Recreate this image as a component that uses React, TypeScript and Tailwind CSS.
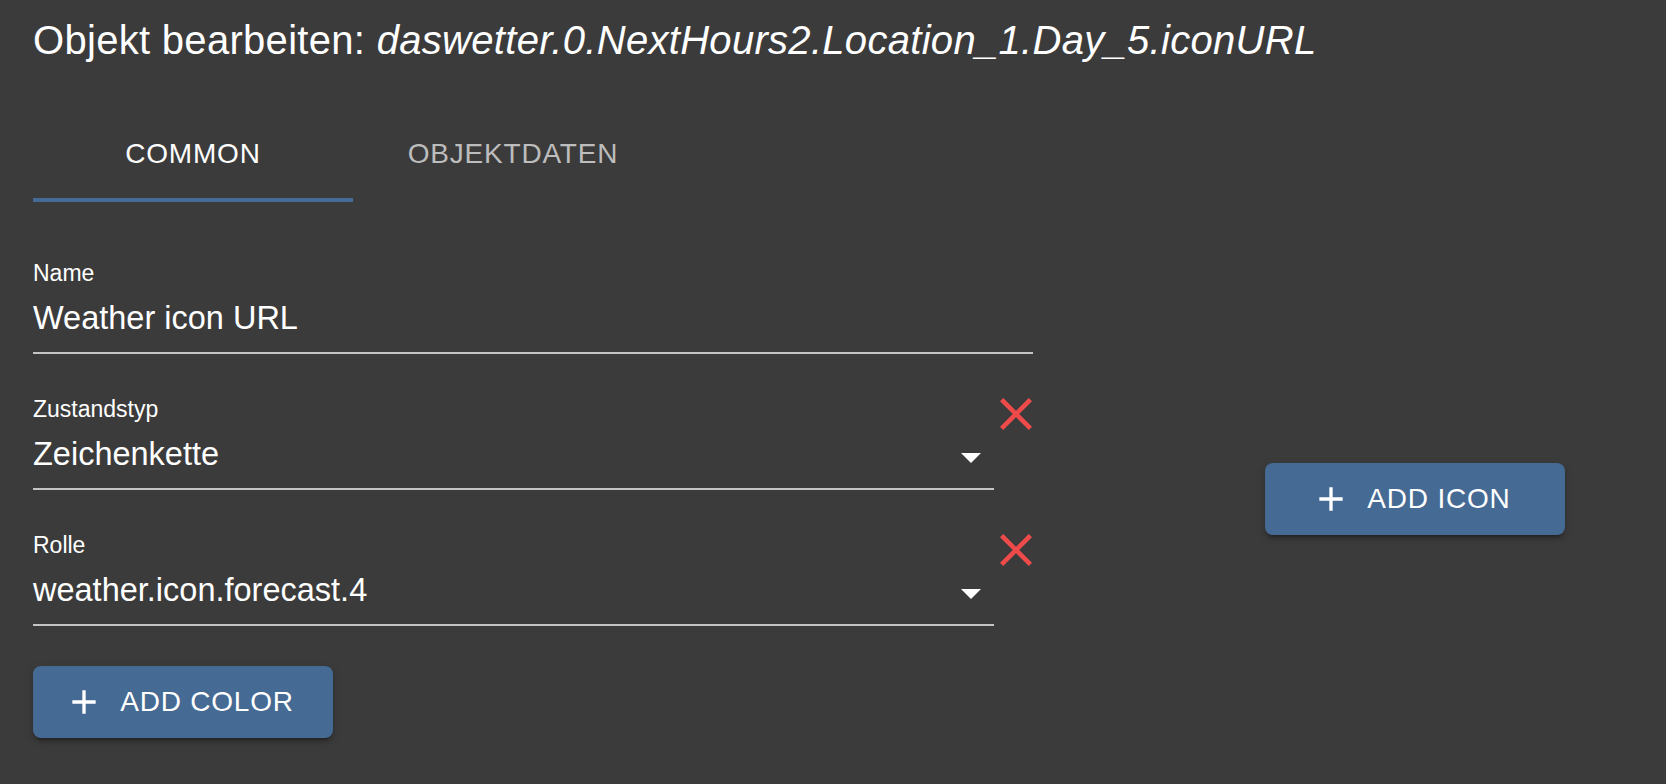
import React from "react";

const fields = [
  { label: "Zustandstyp", value: "Zeichenkette" },
  { label: "Rolle", value: "weather.icon.forecast.4" },
];

function PlusIcon() {
  return (
    <svg width="40" height="40" viewBox="0 0 24 24" className="-ml-[8px] mr-[16px] shrink-0" fill="currentColor">
      <path d="M19 13h-6v6h-2v-6H5v-2h6V5h2v6h6v2z" />
    </svg>
  );
}

function CloseIcon() {
  return (
    <svg width="32" height="32" viewBox="5 5 14 14" fill="#ee4a4a">
      <path d="M19 6.41L17.59 5 12 10.59 6.41 5 5 6.41 10.59 12 5 17.59 6.41 19 12 13.41 17.59 19 19 17.59 13.41 12z" />
    </svg>
  );
}

function AddButton({ label }: { label: string }) {
  return (
    <button className="flex h-[72px] w-[300px] items-center justify-center rounded-[8px] bg-[#456a94] text-[28px] font-medium uppercase tracking-[0.8px] text-white shadow-[0_6px_2px_-4px_rgba(0,0,0,0.2),0_4px_4px_0_rgba(0,0,0,0.14),0_2px_10px_0_rgba(0,0,0,0.12)]">
      <PlusIcon />
      <span className="leading-[40px]">{label}</span>
    </button>
  );
}

function TextField({ label, value }: { label: string; value: string }) {
  return (
    <div className="flex flex-col">
      <div className="text-[23px] leading-[28px]">{label}</div>
      <div className="mt-[11px] border-b-2 border-[#c4c4c4] pb-[14px] text-[32.5px] leading-[40px]">{value}</div>
    </div>
  );
}

function SelectField({ label, value }: { label: string; value: string }) {
  return (
    <div className="flex">
      <div className="flex w-[961px] flex-col">
        <div className="text-[23px] leading-[28px]">{label}</div>
        <div className="mt-[11px] flex items-center justify-between border-b-2 border-[#c4c4c4] pb-[14px]">
          <span className="text-[32.5px] leading-[40px]">{value}</span>
          <svg width="20" height="10" viewBox="0 0 10 5" className="mr-[13px] mt-[8px]" fill="white">
            <path d="M0 0l5 5 5-5z" />
          </svg>
        </div>
      </div>
      <div className="ml-[6px] mt-[3px]">
        <CloseIcon />
      </div>
    </div>
  );
}

export default function App() {
  return (
    <div className="min-h-screen w-full bg-[#3b3b3b] font-['Liberation_Sans',Arial,sans-serif] text-white">
      <div className="pl-[33px] pt-[16px]">
        <h2 className="text-[40px] font-normal leading-[48px] tracking-[0.3px]">
          Objekt bearbeiten: <span className="italic">daswetter.0.NextHours2.Location_1.Day_5.iconURL</span>
        </h2>

        <div className="mt-[42px] flex">
          <div className="relative flex h-[96px] w-[320px] items-center justify-center text-[28px] font-medium uppercase tracking-[0.8px] text-white">
            Common
            <span className="absolute bottom-0 left-0 h-[4px] w-full bg-[#456a94]" />
          </div>
          <div className="flex h-[96px] w-[320px] items-center justify-center text-[28px] font-medium uppercase tracking-[0.8px] text-[#bdbdbd]">
            Objektdaten
          </div>
        </div>

        <div className="mt-[57px] flex items-center">
          <div className="flex w-[1000px] flex-col">
            <div className="flex flex-col gap-[41px]">
              <TextField label="Name" value="Weather icon URL" />
              {fields.map((f) => (
                <SelectField key={f.label} label={f.label} value={f.value} />
              ))}
            </div>
            <div className="mt-[40px]">
              <AddButton label="Add color" />
            </div>
          </div>
          <div className="ml-[232px]">
            <AddButton label="Add icon" />
          </div>
        </div>
      </div>
    </div>
  );
}
